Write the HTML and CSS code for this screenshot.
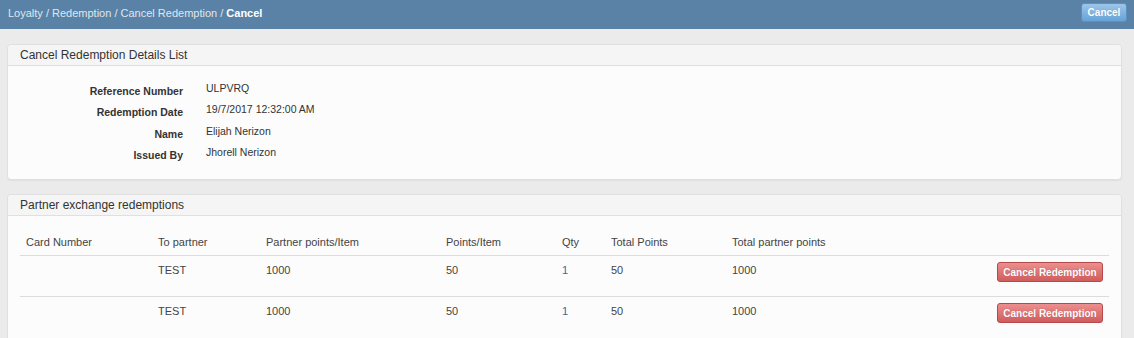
FILE: index.html
```html
<!DOCTYPE html>
<html lang="en">
<head>
    <meta charset="UTF-8">
    <meta name="viewport" content="width=device-width, initial-scale=1.0">
    <title>Cancel Redemption</title>
    <link rel="stylesheet" href="styles.css">
</head>
<body>
    <div class="topbar">
        <div class="crumbs">
            <a href="#">Loyalty</a> / <a href="#">Redemption</a> / <a href="#">Cancel Redemption</a> / <span class="current">Cancel</span>
        </div>
        <button class="btn btn-blue">Cancel</button>
    </div>

    <div class="content">
        <div class="panel">
            <div class="panel-heading">Cancel Redemption Details List</div>
            <div class="panel-body details">
                <div class="detail-row">
                    <label>Reference Number</label>
                    <span>ULPVRQ</span>
                </div>
                <div class="detail-row">
                    <label>Redemption Date</label>
                    <span>19/7/2017 12:32:00 AM</span>
                </div>
                <div class="detail-row">
                    <label>Name</label>
                    <span>Elijah Nerizon</span>
                </div>
                <div class="detail-row">
                    <label>Issued By</label>
                    <span>Jhorell Nerizon</span>
                </div>
            </div>
        </div>

        <div class="panel">
            <div class="panel-heading">Partner exchange redemptions</div>
            <div class="panel-body">
                <table>
                    <colgroup>
                        <col style="width: 132px">
                        <col style="width: 108px">
                        <col style="width: 180px">
                        <col style="width: 116px">
                        <col style="width: 49px">
                        <col style="width: 121px">
                        <col>
                        <col style="width: 120px">
                    </colgroup>
                    <thead>
                        <tr>
                            <th>Card Number</th>
                            <th>To partner</th>
                            <th>Partner points/Item</th>
                            <th>Points/Item</th>
                            <th>Qty</th>
                            <th>Total Points</th>
                            <th>Total partner points</th>
                            <th></th>
                        </tr>
                    </thead>
                    <tbody>
                        <tr>
                            <td></td>
                            <td>TEST</td>
                            <td>1000</td>
                            <td>50</td>
                            <td class="qty">1</td>
                            <td>50</td>
                            <td>1000</td>
                            <td class="actions"><button class="btn btn-red">Cancel Redemption</button></td>
                        </tr>
                        <tr>
                            <td></td>
                            <td>TEST</td>
                            <td>1000</td>
                            <td>50</td>
                            <td class="qty">1</td>
                            <td>50</td>
                            <td>1000</td>
                            <td class="actions"><button class="btn btn-red">Cancel Redemption</button></td>
                        </tr>
                    </tbody>
                </table>
            </div>
        </div>
    </div>
</body>
</html>
```

FILE: styles.css
```css
body {
    margin: 0;
    background: #ebebeb;
    font-family: "Liberation Sans", Arial, sans-serif;
    font-size: 11px;
    color: #333;
}

.topbar {
    height: 29px;
    background: #5a82a7;
    display: flex;
    align-items: center;
    justify-content: space-between;
    padding: 0 7px 0 8px;
}
.crumbs { color: #dfe7ef; font-size: 11px; padding-bottom: 4px; }
.crumbs a { color: #dfe7ef; text-decoration: none; }
.crumbs .current { color: #fff; font-weight: bold; }

.btn {
    font-family: "Liberation Sans", Arial, sans-serif;
    font-weight: bold;
    font-size: 10px;
    color: #fff;
    border-radius: 3px;
    cursor: pointer;
    line-height: 15px;
    white-space: nowrap;
}
.btn-blue {
    width: 46px;
    height: 19px;
    padding: 0;
    margin-bottom: 4px;
    background: linear-gradient(#9cc6ea, #66a3d8);
    border: 1px solid #5d8fbf;
    text-shadow: 0 0 1px #6a9cc9;
}
.btn-red {
    width: 106px;
    height: 20px;
    padding: 0;
    background: linear-gradient(#ec8f8f, #d05c5c);
    border: 1px solid #b64a4a;
    text-shadow: 0 0 1px #b85555;
}

.content { padding: 15px 12px 0 7px; }

.panel {
    background: #fcfcfc;
    border: 1px solid #e0e0e0;
    border-radius: 4px;
    box-shadow: 0 1px 1px rgba(0, 0, 0, 0.05);
    margin-bottom: 14px;
}
.panel-heading {
    background: #f5f5f5;
    border-bottom: 1px solid #e0e0e0;
    border-radius: 4px 4px 0 0;
    height: 20px;
    line-height: 20px;
    padding: 0 12px;
    font-size: 12px;
    color: #333;
}
.panel-body { padding: 10px 12px 12px; }

.details { padding: 15px 0 13px; font-size: 10.5px; }
.detail-row {
    display: grid;
    grid-template-columns: 175px auto;
    column-gap: 23px;
    height: 21.3px;
}
.detail-row label {
    text-align: right;
    font-weight: bold;
    padding-top: 4px;
}
.detail-row span { padding-top: 1px; }

table {
    width: 100%;
    border-collapse: collapse;
    table-layout: fixed;
    color: #444;
}
th {
    text-align: left;
    font-weight: normal;
    padding: 8px 6px 4px;
    line-height: 17px;
    border-bottom: 1px solid #dcdcdc;
}
td {
    padding: 6px 6px 15px;
    line-height: 17px;
    vertical-align: top;
    border-bottom: 1px solid #dcdcdc;
}
tbody tr:last-child td { border-bottom: none; }
td.qty { color: #3a6a99; }
td.actions { text-align: right; padding-top: 6px; padding-bottom: 14px; }
```
